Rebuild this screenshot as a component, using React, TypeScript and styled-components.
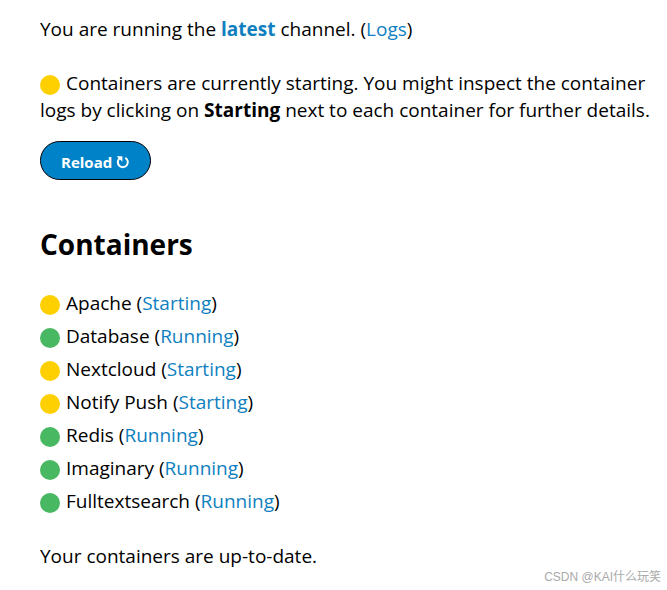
import React from "react";
import styled, { createGlobalStyle } from "styled-components";

const GlobalStyle = createGlobalStyle`
  * { box-sizing: border-box; }
  body {
    margin: 0;
    background: #fff;
    color: #000;
    font-family: "Open Sans", "Noto Sans", "Noto Sans CJK SC", sans-serif;
    font-size: 19px;
    line-height: 27px;
  }
`;

const Page = styled.main`
  padding: 16px 6px 0 40px;
`;

const Paragraph = styled.p`
  margin: 0 0 27px;
`;

const Notice = styled(Paragraph)`
  margin-bottom: 17px;
`;

const Status = styled.p`
  margin: 0;
`;

const Link = styled.a<{ $strong?: boolean }>`
  color: #0f7fc0;
  font-weight: ${(p) => (p.$strong ? 700 : 400)};
  text-decoration: none;
`;

const Dot = styled.span<{ $color: string }>`
  display: inline-block;
  width: 20px;
  height: 20px;
  margin-right: 6px;
  border-radius: 50%;
  background: ${(p) => p.$color};
  vertical-align: -5px;
`;

const ReloadButton = styled.button`
  display: flex;
  align-items: center;
  gap: 4px;
  height: 39px;
  padding: 3px 20px 0;
  border: 1px solid #000;
  border-radius: 20px;
  background: #0082c9;
  color: #fff;
  font: 700 15px/20px "Open Sans", "Noto Sans", sans-serif;
`;

const ReloadIcon = styled.svg`
  width: 14px;
  height: 14px;
`;

const Heading = styled.h2`
  margin: 45px 0 24px;
  font-size: 28px;
  line-height: 38px;
`;

const List = styled.ul`
  margin: 0 0 25px;
  padding: 0;
  list-style: none;
`;

const Item = styled.li`
  line-height: 33px;
`;

const Watermark = styled.footer`
  color: #aaa;
  font: 12px/14px "Liberation Sans", "Noto Sans CJK SC", sans-serif;
  text-align: right;
`;

const YELLOW = "#ffd000";
const GREEN = "#49b862";

const containers = [
  { name: "Apache", running: false },
  { name: "Database", running: true },
  { name: "Nextcloud", running: false },
  { name: "Notify Push", running: false },
  { name: "Redis", running: true },
  { name: "Imaginary", running: true },
  { name: "Fulltextsearch", running: true },
];

export default function App() {
  return (
    <Page>
      <GlobalStyle />
      <Paragraph>
        You are running the <Link $strong href="#channel">latest</Link> channel. (<Link href="#logs">Logs</Link>)
      </Paragraph>
      <Notice>
        <Dot $color={YELLOW} />
        Containers are currently starting. You might inspect the container logs by clicking on <b>Starting</b> next to each container for further details.
      </Notice>
      <ReloadButton type="button">
        Reload
        <ReloadIcon viewBox="0 0 14 14" fill="none" aria-hidden="true">
          <path d="M9.3 2.8A5 5 0 1 1 3.3 3.6" stroke="currentColor" strokeWidth="2" />
          <path d="M0.8 1.2H6.4V6.8L4.6 5 3.2 4.2Z" fill="currentColor" />
        </ReloadIcon>
      </ReloadButton>
      <Heading>Containers</Heading>
      <List>
        {containers.map((c) => (
          <Item key={c.name}>
            <Dot $color={c.running ? GREEN : YELLOW} />
            {c.name} (<Link href={`#${c.name}`}>{c.running ? "Running" : "Starting"}</Link>)
          </Item>
        ))}
      </List>
      <Status>Your containers are up-to-date.</Status>
      <Watermark>CSDN @KAI什么玩笑</Watermark>
    </Page>
  );
}
